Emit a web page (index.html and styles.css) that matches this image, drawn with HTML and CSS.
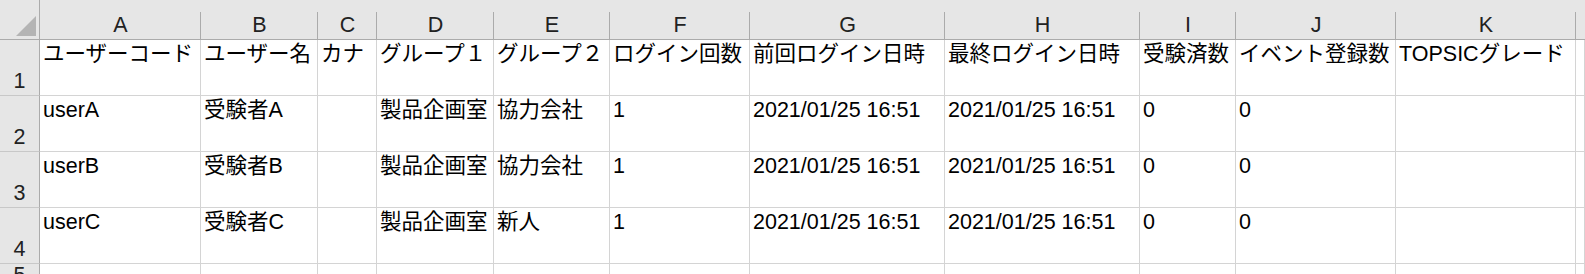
FILE: index.html
```html
<!DOCTYPE html>
<html lang="ja">
<head>
<meta charset="utf-8">
<title>ユーザー一覧</title>
<link rel="stylesheet" href="styles.css">
</head>
<body>

<div class="sheet">
  <div class="corner"><span class="tri"></span></div>
  <div class="colhead">A</div>
  <div class="colhead">B</div>
  <div class="colhead">C</div>
  <div class="colhead">D</div>
  <div class="colhead">E</div>
  <div class="colhead">F</div>
  <div class="colhead">G</div>
  <div class="colhead">H</div>
  <div class="colhead">I</div>
  <div class="colhead">J</div>
  <div class="colhead">K</div>
  <div class="colhead last"></div>

  <div class="rowhead">1</div>
  <div class="cell">ユーザーコード</div>
  <div class="cell">ユーザー名</div>
  <div class="cell">カナ</div>
  <div class="cell">グループ１</div>
  <div class="cell">グループ２</div>
  <div class="cell">ログイン回数</div>
  <div class="cell">前回ログイン日時</div>
  <div class="cell">最終ログイン日時</div>
  <div class="cell">受験済数</div>
  <div class="cell">イベント登録数</div>
  <div class="cell">TOPSICグレード</div>
  <div class="cell"></div>

  <div class="rowhead">2</div>
  <div class="cell">userA</div>
  <div class="cell">受験者A</div>
  <div class="cell"></div>
  <div class="cell">製品企画室</div>
  <div class="cell">協力会社</div>
  <div class="cell">1</div>
  <div class="cell">2021/01/25 16:51</div>
  <div class="cell">2021/01/25 16:51</div>
  <div class="cell">0</div>
  <div class="cell">0</div>
  <div class="cell"></div>
  <div class="cell"></div>

  <div class="rowhead">3</div>
  <div class="cell">userB</div>
  <div class="cell">受験者B</div>
  <div class="cell"></div>
  <div class="cell">製品企画室</div>
  <div class="cell">協力会社</div>
  <div class="cell">1</div>
  <div class="cell">2021/01/25 16:51</div>
  <div class="cell">2021/01/25 16:51</div>
  <div class="cell">0</div>
  <div class="cell">0</div>
  <div class="cell"></div>
  <div class="cell"></div>

  <div class="rowhead">4</div>
  <div class="cell">userC</div>
  <div class="cell">受験者C</div>
  <div class="cell"></div>
  <div class="cell">製品企画室</div>
  <div class="cell">新人</div>
  <div class="cell">1</div>
  <div class="cell">2021/01/25 16:51</div>
  <div class="cell">2021/01/25 16:51</div>
  <div class="cell">0</div>
  <div class="cell">0</div>
  <div class="cell"></div>
  <div class="cell"></div>

  <div class="rowhead">5</div>
  <div class="cell"></div>
  <div class="cell"></div>
  <div class="cell"></div>
  <div class="cell"></div>
  <div class="cell"></div>
  <div class="cell"></div>
  <div class="cell"></div>
  <div class="cell"></div>
  <div class="cell"></div>
  <div class="cell"></div>
  <div class="cell"></div>
  <div class="cell"></div>
</div>

</body>
</html>
```

FILE: styles.css
```css
html, body {margin:0; padding:0; background:#fff; overflow:hidden;}
body {font: 21.5px/24px "Liberation Sans", "Noto Sans CJK JP", sans-serif; color:#000;}

/* columns: row numbers, A..K, then whatever is left of L */
.sheet {display:grid; grid-template-columns: 40px 161px 117px 59px 117px 116px 140px 195px 195px 96px 160px 180px 1fr; grid-template-rows: 40px 56px 56px 56px 56px 26px;}
.sheet > div {box-sizing:border-box; white-space:nowrap; overflow:hidden;}

.corner {background:#e6e6e6; border-right:1px solid #ababab; border-bottom:1px solid #ababab; display:flex; justify-content:flex-end; align-items:flex-end; padding:0 3px 3px 0;}
.tri {display:block; width:20px; height:20px; background:#b4b4b4; clip-path:polygon(100% 0, 100% 100%, 0 100%);}

/* header separators only run over the lower part of the bar */
.colhead {background: linear-gradient(#ababab, #ababab) right bottom / 1px 27px no-repeat, #e6e6e6; border-bottom:1px solid #ababab; text-align:center; color:#222; padding-top:13px;}
.colhead.last {background:#e6e6e6;}

.rowhead {background:#e6e6e6; border-right:1px solid #ababab; border-bottom:1px solid #c8c8c8; color:#222; display:flex; justify-content:center; align-items:flex-end; padding-bottom:2px;}

.cell {border-right:1px solid #d4d4d4; border-bottom:1px solid #d4d4d4; padding:2px 3px 0 3px;}
```
